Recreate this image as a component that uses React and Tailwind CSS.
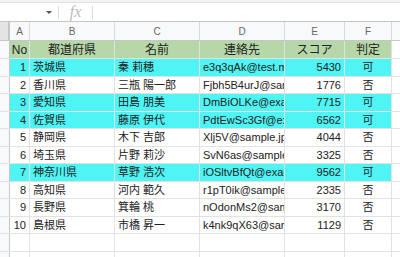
import React from 'react';

const widths = ['w-[20px]', 'w-[85px]', 'w-[85px]', 'w-[85px]', 'w-[60px]', 'w-[47px]'];

const rows = [
  ['1', '茨城県', '秦 莉穂', 'e3q3qAk@test.me.jp', '5430', '可', true],
  ['2', '香川県', '三瓶 陽一郎', 'Fjbh5B4urJ@sample.jp', '1776', '否', false],
  ['3', '愛知県', '田島 朋美', 'DmBiOLKe@example.jp', '7715', '可', true],
  ['4', '佐賀県', '藤原 伊代', 'PdtEwSc3Gf@example.jp', '6562', '可', true],
  ['5', '静岡県', '木下 吉郎', 'Xlj5V@sample.jp', '4044', '否', false],
  ['6', '埼玉県', '片野 莉沙', 'SvN6as@sample.jp', '3325', '否', false],
  ['7', '神奈川県', '草野 浩次', 'iOSltvBfQt@example.jp', '9562', '可', true],
  ['8', '高知県', '河内 範久', 'r1pT0ik@sample.jp', '2335', '否', false],
  ['9', '長野県', '箕輪 桃', 'nOdonMs2@sample.jp', '3170', '否', false],
  ['10', '島根県', '市橋 昇一', 'k4nk9qX63@sample.jp', '1129', '否', false],
];

const align = ['justify-end pr-[3px]', 'justify-start pl-[3px]', 'justify-start pl-[3px]', 'justify-start pl-[3px]', 'justify-end pr-[3px]', 'justify-center'];

const Cell = ({ w, className = '', children }) => (
  <div className={`${w} shrink-0 h-full flex items-center overflow-hidden whitespace-nowrap border-r border-[#e2e2e2] ${className}`}>
    {children}
  </div>
);

const RowHead = ({ className = '' }) => (
  <div className={`w-[10px] shrink-0 h-full bg-[#f8f9fa] border-r border-[#c4c7c5] ${className}`} />
);

export default function App() {
  return (
    <div className="w-[400px] h-[257px] overflow-hidden bg-white text-[11px] text-[#222]" style={{ fontFamily: '"Liberation Sans", "Noto Sans CJK JP", sans-serif' }}>
      {/* formula bar */}
      <div className="h-[3px] bg-[#f1f3f4] border-b border-[#e0e0e0]" />
      <div className="h-[19px] flex items-center border-b border-[#c4c7c5]">
        <div className="w-[58px] h-full flex items-center justify-end pr-[6px]">
          <div className="w-0 h-0 border-l-[3px] border-r-[3px] border-t-[3px] border-l-transparent border-r-transparent border-t-[#555]" />
        </div>
        <div className="w-px h-[13px] bg-[#dadce0]" />
        <div className="w-[33px] flex justify-center text-[16px] italic text-[#bbb]" style={{ fontFamily: '"Liberation Serif", serif' }}>fx</div>
        <div className="w-px h-[13px] bg-[#dadce0]" />
      </div>

      {/* column letters */}
      <div className="h-[19px] flex border-b border-[#c4c7c5] bg-[#f8f9fa] text-[10px] text-[#666]">
        <div className="w-[10px] shrink-0 h-full bg-[#e4e4e4] border-r-[2px] border-[#c4c7c5]" />
        {['A', 'B', 'C', 'D', 'E', 'F'].map((l, i) => (
          <div key={l} className={`${widths[i]} shrink-0 h-full flex items-center justify-center border-r border-[#d9d9d9]`}>{l}</div>
        ))}
        <div className="flex-1" />
      </div>

      {/* header row */}
      <div className="h-[18px] flex border-b border-[#e2e2e2] text-[12px]">
        <RowHead />
        {['No', '都道府県', '名前', '連絡先', 'スコア', '判定'].map((t, i) => (
          <Cell key={t} w={widths[i]} className="justify-center bg-[#b6d7a8] border-[#d3e6cb]">{t}</Cell>
        ))}
        <div className="flex-1" />
      </div>

      {rows.map((r) => (
        <div key={r[0]} className="h-[17.5px] flex border-b border-[#e2e2e2] text-[11px]">
          <RowHead />
          {r.slice(0, 6).map((v, i) => (
            <Cell key={i} w={widths[i]} className={`${align[i]} ${r[6] ? 'bg-[#4ff5f5]' : ''}`}>{v}</Cell>
          ))}
          <div className="flex-1" />
        </div>
      ))}

      {[0, 1].map((k) => (
        <div key={k} className="h-[17.5px] flex border-b border-[#e2e2e2]">
          <RowHead />
          {widths.map((w, i) => (
            <Cell key={i} w={w} />
          ))}
          <div className="flex-1" />
        </div>
      ))}
    </div>
  );
}
